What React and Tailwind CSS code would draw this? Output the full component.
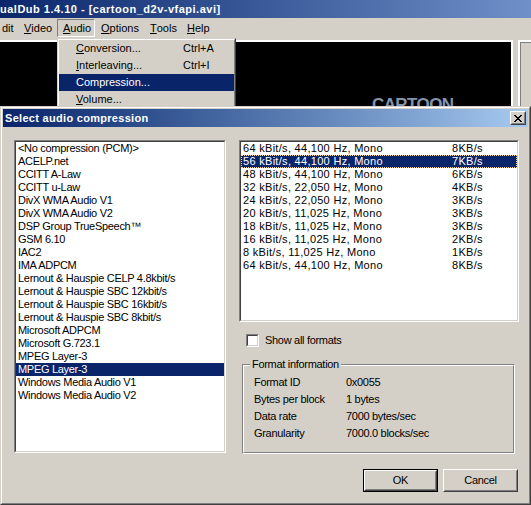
import React from 'react'

const codecs = [
	'<No compression (PCM)>',
	'ACELP.net',
	'CCITT A-Law',
	'CCITT u-Law',
	'DivX WMA Audio V1',
	'DivX WMA Audio V2',
	'DSP Group TrueSpeech™',
	'GSM 6.10',
	'IAC2',
	'IMA ADPCM',
	'Lernout & Hauspie CELP 4.8kbit/s',
	'Lernout & Hauspie SBC 12kbit/s',
	'Lernout & Hauspie SBC 16kbit/s',
	'Lernout & Hauspie SBC 8kbit/s',
	'Microsoft ADPCM',
	'Microsoft G.723.1',
	'MPEG Layer-3',
	'MPEG Layer-3',
	'Windows Media Audio V1',
	'Windows Media Audio V2'
]

const formats = [
	['64 kBit/s, 44,100 Hz, Mono', '8KB/s'],
	['56 kBit/s, 44,100 Hz, Mono', '7KB/s'],
	['48 kBit/s, 44,100 Hz, Mono', '6KB/s'],
	['32 kBit/s, 22,050 Hz, Mono', '4KB/s'],
	['24 kBit/s, 22,050 Hz, Mono', '3KB/s'],
	['20 kBit/s, 11,025 Hz, Mono', '3KB/s'],
	['18 kBit/s, 11,025 Hz, Mono', '3KB/s'],
	['16 kBit/s, 11,025 Hz, Mono', '2KB/s'],
	['8 kBit/s, 11,025 Hz, Mono', '1KB/s'],
	['64 kBit/s, 44,100 Hz, Mono', '8KB/s']
]

const formatInfo = [
	['Format ID', '0x0055'],
	['Bytes per block', '1 bytes'],
	['Data rate', '7000 bytes/sec'],
	['Granularity', '7000.0 blocks/sec']
]

// win2k style 3d edges
const Sunken = ({ className = '', children }) => (
	<div className={`border border-t-[#808080] border-l-[#808080] border-b-white border-r-white ${className}`}>
		<div className="h-full border border-t-[#404040] border-l-[#404040] border-b-[#d4d0c8] border-r-[#d4d0c8] bg-white">
			{children}
		</div>
	</div>
)

const Raised = ({ className = '', children }) => (
	<div className={`border border-t-white border-l-white border-b-[#404040] border-r-[#404040] ${className}`}>
		<div className="flex h-full items-center justify-center border border-t-[#d4d0c8] border-l-[#d4d0c8] border-b-[#808080] border-r-[#808080] bg-[#d4d0c8]">
			{children}
		</div>
	</div>
)

const CloseGlyph = () => (
	<svg width="8" height="7" viewBox="0 0 8 7" shapeRendering="crispEdges">
		<path
			d="M0 0h2v1h-2z M6 0h2v1h-2z M1 1h2v1h-2z M5 1h2v1h-2z M2 2h4v1h-4z M3 3h2v1h-2z M2 4h4v1h-4z M1 5h2v1h-2z M5 5h2v1h-2z M0 6h2v1h-2z M6 6h2v1h-2z"
			fill="#000"
		/>
	</svg>
)

const MenuItem = ({ width, children, active }) =>
	active ? (
		<div
			className={`flex h-[18px] items-center border border-t-[#808080] border-l-[#808080] border-b-white border-r-white pl-[5px] ${width}`}
		>
			{children}
		</div>
	) : (
		<div className={`flex h-[18px] items-center pl-[6px] ${width}`}>{children}</div>
	)

const DropItem = ({ label, shortcut, selected }) => (
	<div className={`flex h-[17px] items-center pl-[17px] ${selected ? 'bg-[#0a246a] text-white' : ''}`}>
		<span className="w-[107px]">{label}</span>
		<span>{shortcut}</span>
	</div>
)

export default function App() {
	return (
		<div className="relative h-[505px] w-[531px] overflow-hidden bg-[#d4d0c8] font-['Liberation_Sans',Arial,sans-serif] text-[11px] leading-[13px] text-black">
			{/* main window behind */}
			<div className="flex h-[18px] items-center bg-linear-to-r from-[#0c266c] to-[#6f90c8] font-bold tracking-[0.5px] whitespace-nowrap text-white">
				ualDub 1.4.10 - [cartoon_d2v-vfapi.avi]
			</div>
			<div className="flex h-[20px] items-center">
				<div className="flex h-[18px] w-[18px] items-center pl-[2px]">dit</div>
				<MenuItem width="w-[39px]">
					<span className="underline">V</span>ideo
				</MenuItem>
				<MenuItem width="w-[38px]" active>
					<span className="underline">A</span>udio
				</MenuItem>
				<MenuItem width="w-[49px]">
					<span className="underline">O</span>ptions
				</MenuItem>
				<MenuItem width="w-[37px]">
					<span className="underline">T</span>ools
				</MenuItem>
				<MenuItem width="w-[34px]">
					<span className="underline">H</span>elp
				</MenuItem>
			</div>
			<div className="flex pt-[2px]">
				<div className="h-[90px] w-[513px] flex-none border-t-2 border-r-2 border-white bg-black pt-[54px] pl-[372px]">
					<div className="text-[17px] leading-none font-bold tracking-[-0.6px] text-[#8694aa]">CARTOON</div>
				</div>
				<div className="ml-[5px] h-[90px] flex-1 border-t-2 border-l-2 border-white">
					<div className="h-full border-t border-l border-[#808080]" />
				</div>
			</div>

			{/* Audio dropdown */}
			<div className="absolute top-[38px] left-[57px] w-[179px] border border-t-[#d4d0c8] border-l-[#d4d0c8] border-b-[#404040] border-r-[#404040]">
				<div className="border border-t-white border-l-white border-b-[#808080] border-r-[#808080] bg-[#d4d0c8]">
					<DropItem
						label={
							<>
								<span className="underline">C</span>onversion...
							</>
						}
						shortcut="Ctrl+A"
					/>
					<DropItem
						label={
							<>
								<span className="underline">I</span>nterleaving...
							</>
						}
						shortcut="Ctrl+I"
					/>
					<DropItem label="Compression..." selected />
					<DropItem
						label={
							<>
								<span className="underline">V</span>olume...
							</>
						}
					/>
				</div>
			</div>

			{/* dialog */}
			<div className="absolute top-[106px] left-0 h-[399px] w-[531px] border border-t-[#d4d0c8] border-l-[#d4d0c8] border-b-[#404040] border-r-[#404040]">
				<div className="flex h-full flex-col border border-t-white border-l-white border-b-[#808080] border-r-[#808080] bg-[#d4d0c8] p-px">
					<div className="flex h-[18px] flex-none items-center justify-between bg-linear-to-r from-[#0a246a] to-[#a6caf0] pr-[2px] pl-[2px]">
						<span className="font-bold tracking-[0.3px] text-white">Select audio compression</span>
						<Raised className="h-[14px] w-[16px]">
							<CloseGlyph />
						</Raised>
					</div>

					<div className="flex gap-[13px] pt-[13px] pl-[11px] tracking-[-0.3px]">
						<Sunken className="h-[313px] w-[212px]">
							{codecs.map((name, i) => (
								<div
									key={i}
									className={`h-[13px] pl-[2px] whitespace-nowrap ${i === 17 ? 'bg-[#0a246a] text-white' : ''}`}
								>
									{name}
								</div>
							))}
						</Sunken>

						<div className="flex w-[280px] flex-col">
							<Sunken className="h-[182px] tracking-[0.3px]">
								{formats.map(([rate, kb], i) => (
									<div
										key={i}
										className={`flex h-[13px] pl-[2px] whitespace-nowrap ${
											i === 1
												? 'bg-[#0a246a] text-white outline-1 -outline-offset-1 outline-[#f5db95] outline-dotted'
												: ''
										}`}
									>
										<span className="w-[209px]">{rate}</span>
										<span>{kb}</span>
									</div>
								))}
							</Sunken>

							<div className="mt-[12px] flex h-[13px] items-center pl-[7px]">
								<Sunken className="h-[13px] w-[13px]" />
								<span className="ml-[6px]">Show all formats</span>
							</div>

							<div className="mt-[17px] ml-[3px] h-[90px] w-[273px] border border-t-[#808080] border-l-[#808080] border-b-white border-r-white">
								<div className="h-full border border-t-white border-l-white border-b-[#808080] border-r-[#808080]">
									<div className="-mt-[8px] ml-[6px] w-fit bg-[#d4d0c8] px-[2px]">Format information</div>
									<div className="mt-[3px] pl-[10px]">
										{formatInfo.map(([k, v]) => (
											<div key={k} className="flex h-[17px] items-center">
												<span className="w-[92px]">{k}</span>
												<span>{v}</span>
											</div>
										))}
									</div>
								</div>
							</div>

							<div className="mt-[15px] flex justify-end gap-[5px] pr-[1px]">
								<div className="h-[23px] w-[75px] border border-black">
									<Raised className="h-full w-full">OK</Raised>
								</div>
								<Raised className="h-[23px] w-[75px]">Cancel</Raised>
							</div>
						</div>
					</div>
				</div>
			</div>
		</div>
	)
}
